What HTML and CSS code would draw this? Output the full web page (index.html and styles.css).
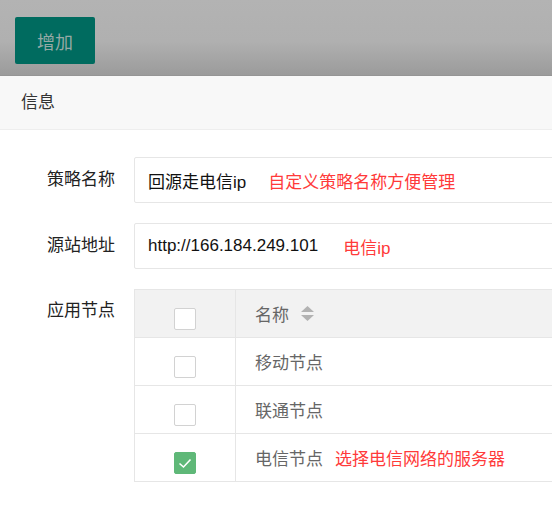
FILE: index.html
```html
<!DOCTYPE html>
<html lang="zh-CN">
<head>
<meta charset="utf-8">
<title>信息</title>
<link rel="stylesheet" href="styles.css">
</head>
<body>
<div class="page">
  <div class="toolbar">
    <button class="btn-add" type="button">增加</button>
  </div>
  <div class="panel-head">信息</div>
  <div class="form">
    <div class="form-row">
      <label class="form-label">策略名称</label>
      <div class="input">
        <span class="val">回源走电信ip</span>
        <span class="hint hint-wide">自定义策略名称方便管理</span>
      </div>
    </div>
    <div class="form-row">
      <label class="form-label">源站地址</label>
      <div class="input">
        <span class="val">http://166.184.249.101</span>
        <span class="hint">电信ip</span>
      </div>
    </div>
    <div class="form-row">
      <label class="form-label form-label-top">应用节点</label>
      <div class="table">
        <div class="tr th">
          <div class="td td-check"><span class="cbox"></span></div>
          <div class="td td-name">名称
            <svg class="sort" width="13" height="16" viewBox="0 0 13 16"><path d="M6.5 0 L13 6 H0 Z" fill="#b2b2b2"/><path d="M0 9 H13 L6.5 15 Z" fill="#b2b2b2"/></svg>
          </div>
        </div>
        <div class="tr">
          <div class="td td-check"><span class="cbox"></span></div>
          <div class="td td-name">移动节点</div>
        </div>
        <div class="tr">
          <div class="td td-check"><span class="cbox"></span></div>
          <div class="td td-name">联通节点</div>
        </div>
        <div class="tr tr-last">
          <div class="td td-check"><span class="cbox checked"><svg width="14" height="11" viewBox="0 0 14 11"><path d="M1.5 5.5 L5.5 9 L12.5 1.5" fill="none" stroke="#fff" stroke-width="1.6"/></svg></span></div>
          <div class="td td-name">电信节点<span class="hint hint-row">选择电信网络的服务器</span></div>
        </div>
      </div>
    </div>
  </div>
</div>
</body>
</html>
```

FILE: styles.css
```css
html, body {
  margin: 0;
  padding: 0;
  background: #fff;
}
body {
  width: 552px;
  height: 513px;
  overflow: hidden;
  font-family: "Liberation Sans", "Noto Sans CJK SC", sans-serif;
  font-size: 17px;
  color: #333;
}
.toolbar {
  height: 76px;
  border-bottom: 1px solid #959595;
  background: linear-gradient(#b3b3b3 0%, #b0b0b0 55%, #9b9b9b 100%);
  padding: 17px 0 0 15px;
  box-sizing: border-box;
}
.btn-add {
  width: 80px;
  height: 47px;
  border: 0;
  border-radius: 2px;
  background: #006b5f;
  color: #95a9a5;
  font-family: inherit;
  font-size: 18px;
  padding: 0;
  cursor: pointer;
}
.panel-head {
  height: 53px;
  line-height: 53px;
  background: #f8f8f8;
  border-bottom: 1px solid #eee;
  padding-left: 21px;
  color: #333;
}
.form {
  padding-top: 27px;
}
.form-row {
  display: flex;
  align-items: flex-start;
  margin-bottom: 20px;
}
.form-label {
  width: 134px;
  flex: none;
  box-sizing: border-box;
  padding-right: 19px;
  text-align: right;
  line-height: 46px;
  color: #222;
}
.form-label-top {
  line-height: 44px;
}
.input {
  flex: none;
  width: 480px;
  height: 46px;
  box-sizing: border-box;
  border: 1px solid #e6e6e6;
  border-radius: 2px;
  display: flex;
  align-items: center;
  padding-left: 13px;
  color: #111;
}
.hint {
  color: #ff3a3a;
  margin-left: 25px;
}
.hint-wide {
  margin-left: 22px;
}
.hint-row {
  margin-left: 12px;
}
.table {
  flex: none;
  width: 480px;
  border: 1px solid #e6e6e6;
  border-bottom: 0;
}
.tr {
  display: flex;
  height: 48px;
  box-sizing: border-box;
  border-bottom: 1px solid #e6e6e6;
}
.th {
  background: #f2f2f2;
}
.td {
  box-sizing: border-box;
}
.td-check {
  width: 101px;
  flex: none;
  border-right: 1px solid #e6e6e6;
  display: flex;
  justify-content: center;
  padding-top: 18px;
}
.td-name {
  flex: 1;
  padding-left: 19px;
  display: flex;
  align-items: center;
  color: #666;
}
.sort {
  margin-left: 12px;
  margin-top: 1px;
}
.cbox {
  width: 22px;
  height: 22px;
  box-sizing: border-box;
  border: 1px solid #d2d2d2;
  border-radius: 2px;
  background: #fff;
  display: flex;
  align-items: center;
  justify-content: center;
}
.cbox.checked {
  background: #5fb878;
  border-color: #5fb878;
}
```
